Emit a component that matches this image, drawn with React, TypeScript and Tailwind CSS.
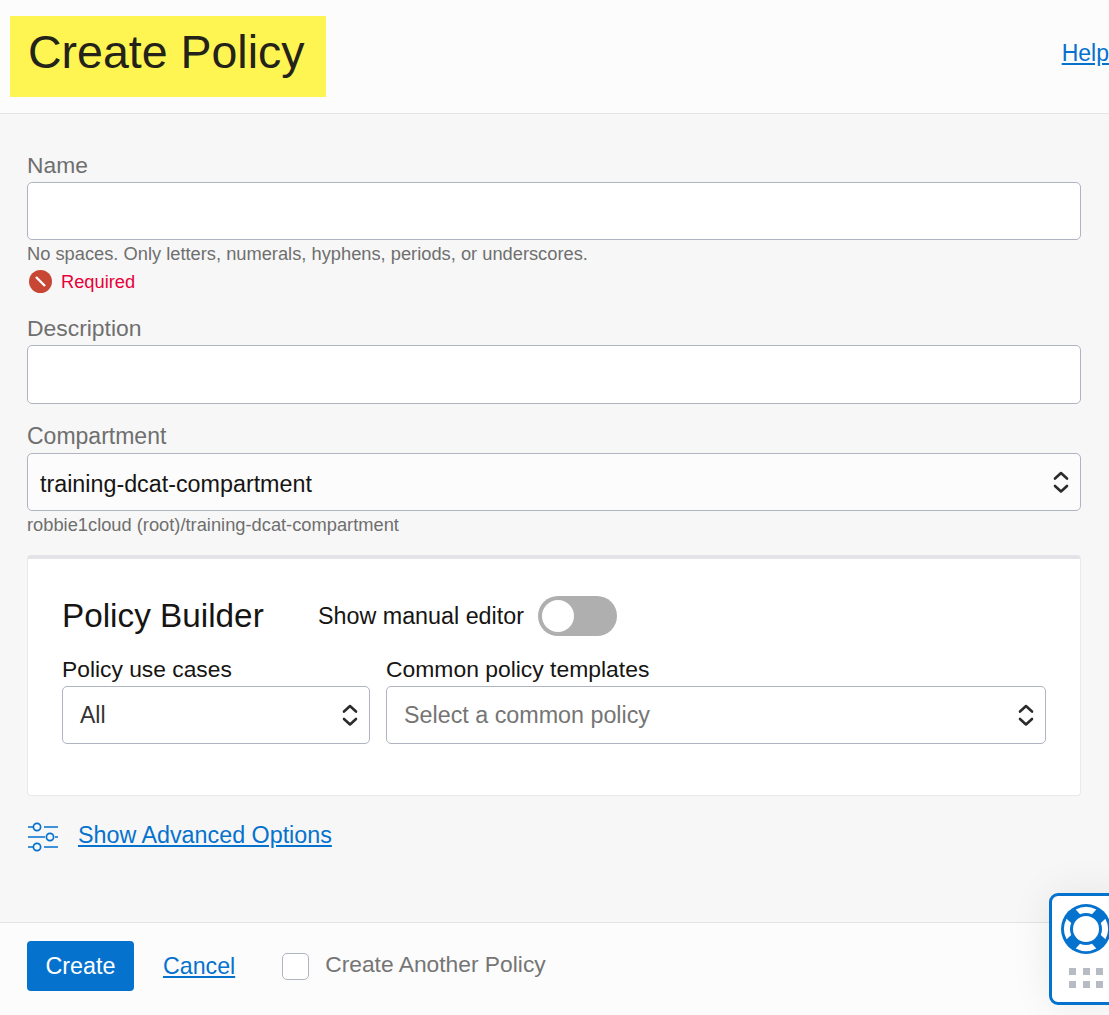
import React from 'react';

const Chevrons = () => (
  <svg width="16" height="24" viewBox="0 0 16 24" fill="none" stroke="#2b2b2b" strokeWidth="2.6" strokeLinecap="round" strokeLinejoin="round">
    <path d="M2 8.500 8 3l6 5.500" />
    <path d="M2 16l6 5.500 6-5.500" />
  </svg>
);

const SliderIcon = () => (
  <svg className="overflow-visible" width="32" height="30" viewBox="0 0 32 30" fill="none" stroke="#0572ce" strokeWidth="1.7">
    <path d="M1 7h5M17 7h14M1 17h17M28 17h3M1 27h5M17 27h14" />
    <circle cx="10" cy="7" r="3.6" />
    <circle cx="23" cy="17" r="3.6" />
    <circle cx="10" cy="27" r="3.6" />
  </svg>
);

const HelpWidget = () => (
  <div className="absolute left-[1049px] top-[893px] h-[112px] w-[80px] rounded-[9px] border-[3px] border-[#0572ce] bg-white shadow-[0_0_40px_rgba(0,0,0,0.08)]">
    <svg className="absolute left-[9px] top-[8px]" width="50" height="50" viewBox="0 0 50 50">
      <circle cx="25" cy="25" r="25" fill="#0572ce" />
      {[0, 90, 180, 270].map((a) => (
        <path key={a} transform={`rotate(${a} 25 25)`} d="M14.700 5.600A22 22 0 0 1 35.300 5.600L31 10.200A16 16 0 0 0 19 10.200Z" fill="white" />
      ))}
      <circle cx="25" cy="25" r="13" fill="white" />
    </svg>
    <div className="absolute left-[17px] top-[72px] grid grid-cols-3 gap-x-[6.500px] gap-y-[6px]">
      {[0, 1, 2, 3, 4, 5].map((i) => (
        <span key={i} className="h-[7px] w-[7px] bg-[#b7bbc4]" />
      ))}
    </div>
  </div>
);

const App: React.FC = () => {
  return (
    <div className="relative flex h-[1015px] w-[1109px] flex-col overflow-hidden bg-[#f7f7f7] font-['Liberation_Sans',Arial,sans-serif]">
      <header className="flex h-[114px] shrink-0 items-start justify-between border-b border-[#e4e4e6] bg-[#fcfcfc] pl-[10px]">
        <h1 className="mt-4 flex h-[81px] w-[316px] items-center bg-[#fff552] pb-[8px] pl-[18px] text-[46.500px] leading-none text-[#23231a]">
          Create Policy
        </h1>
        <a className="mt-[39px] text-[23px] leading-[28px] text-[#0572ce] underline underline-offset-2">Help</a>
      </header>

      <main className="flex flex-1 flex-col pt-[38px] pr-[28px] pl-[27px]">
        <label className="text-[22.800px] leading-[26px] text-[#6f6f6f]">Name</label>
        <div className="mt-[4px] h-[58px] rounded-[5px] border border-[#b0b4c0] bg-white" />
        <p className="mt-[3px] text-[18.300px] leading-[21px] text-[#6f6f6f]">No spaces. Only letters, numerals, hyphens, periods, or underscores.</p>
        <div className="mt-[6px] flex items-center pl-[2px]">
          <svg width="23" height="23" viewBox="0 0 23 23">
            <circle cx="11.500" cy="11.500" r="11.500" fill="#c74634" />
            <path d="M7 7l9 9" stroke="white" strokeWidth="2.400" />
          </svg>
          <span className="ml-[9px] text-[18.300px] leading-[21px] text-[#e8003a]">Required</span>
        </div>
        <label className="mt-[22px] text-[22.900px] leading-[26px] text-[#6f6f6f]">Description</label>
        <div className="mt-[4px] h-[59px] rounded-[5px] border border-[#b0b4c0] bg-white" />
        <label className="mt-[19px] text-[23px] leading-[26px] text-[#6f6f6f]">Compartment</label>
        <div className="mt-[4px] flex h-[58px] items-center justify-between rounded-[5px] border border-[#b0b4c0] bg-[#fcfcfc] pr-[11px] pl-[12px] text-[23.300px] text-[#161513]">
          <span className="mt-[5px]">training-dcat-compartment</span>
          <Chevrons />
        </div>
        <p className="mt-[3px] text-[18.300px] leading-[21px] text-[#6f6f6f]">robbie1cloud (root)/training-dcat-compartment</p>

        <section className="mt-[20px] h-[241px] rounded-[4px] border border-t-[4px] border-[#e9e9ea] border-t-[#e4e4e8] bg-white px-[34px] pt-[34px]">
          <div className="flex items-center">
            <h2 className="w-[256px] text-[33.300px] leading-[46px] text-[#161513]">Policy Builder</h2>
            <span className="text-[23.300px] text-[#161513]">Show manual editor</span>
            <span className="ml-[14px] flex h-[40px] w-[79px] items-center rounded-full bg-[#afafaf] pl-[4px]">
              <span className="h-[32px] w-[32px] rounded-full bg-white" />
            </span>
          </div>
          <div className="mt-[17px] flex gap-[16px]">
            <div className="w-[308px]">
              <div className="text-[22.800px] leading-[26px] text-[#161513]">Policy use cases</div>
              <div className="mt-[4px] flex h-[58px] items-center justify-between rounded-[5px] border border-[#b0b4c0] bg-white pr-[11px] pl-[17px] text-[23px] text-[#333]">
                <span>All</span>
                <Chevrons />
              </div>
            </div>
            <div className="flex-1">
              <div className="text-[22.900px] leading-[26px] text-[#161513]">Common policy templates</div>
              <div className="mt-[4px] flex h-[58px] items-center justify-between rounded-[5px] border border-[#b0b4c0] bg-white pr-[11px] pl-[17px] text-[23.300px] text-[#757575]">
                <span>Select a common policy</span>
                <Chevrons />
              </div>
            </div>
          </div>
        </section>

        <div className="mt-[24px] flex items-center">
          <SliderIcon />
          <a className="ml-[19px] text-[23.300px] leading-[30px] text-[#0572ce] underline underline-offset-2">Show Advanced Options</a>
        </div>
      </main>

      <footer className="flex h-[93px] shrink-0 items-center border-t border-[#e4e4e6] bg-[#fcfcfc] pb-[6px] pl-[27px]">
        <button className="h-[50px] w-[107px] rounded-[4px] bg-[#0572ce] text-[23.300px] text-white">Create</button>
        <a className="ml-[29px] text-[23.200px] text-[#0572ce] underline underline-offset-2">Cancel</a>
        <span className="ml-[47px] h-[27px] w-[27px] rounded-[5px] border border-[#b0b4c0] bg-white" />
        <span className="mb-[4px] ml-[16px] text-[22.800px] text-[#757575]">Create Another Policy</span>
      </footer>

      <HelpWidget />
    </div>
  );
};

export default App;
